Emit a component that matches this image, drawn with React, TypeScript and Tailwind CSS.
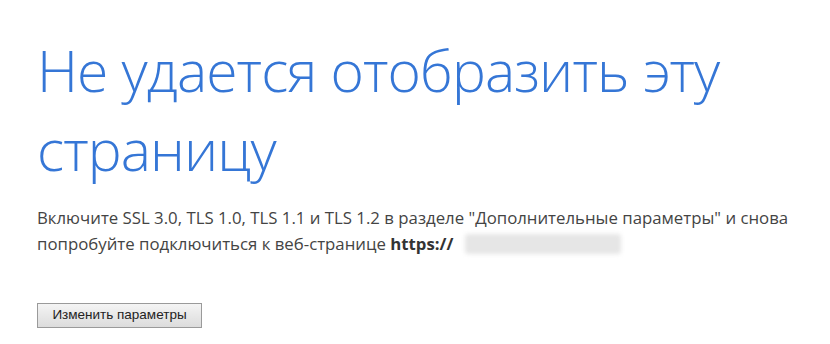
export default function App() {
  return (
    <div className="h-[344px] w-[830px] overflow-hidden bg-white pl-[37px] pt-[31px] font-['Open_Sans',sans-serif]">
      <h1 className="text-[57px] leading-[79px] font-light tracking-[-0.9px] text-[#3576d6]">
        Не удается отобразить эту
        <br />
        страницу
      </h1>
      <p className="mt-[16px] text-[16.8px] leading-[25px] text-[#444]">
        Включите SSL 3.0, TLS 1.0, TLS 1.1 и TLS 1.2 в разделе "Дополнительные параметры" и снова
        <br />
        попробуйте подключиться к веб-странице <b className="font-bold text-[#333]">https://</b>
        <span className="ml-[12px] inline-block h-[20px] w-[156px] translate-y-[4px] rounded-[3px] bg-[#e6e6e6] blur-[2px]" />
      </p>
      <button className="mt-[47px] h-[25px] w-[165px] border border-[#9a9a9a] bg-gradient-to-b from-[#f4f4f4] to-[#dcdcdc] font-['Liberation_Sans',sans-serif] text-[13.5px] text-[#222]">
        Изменить параметры
      </button>
    </div>
  );
}
